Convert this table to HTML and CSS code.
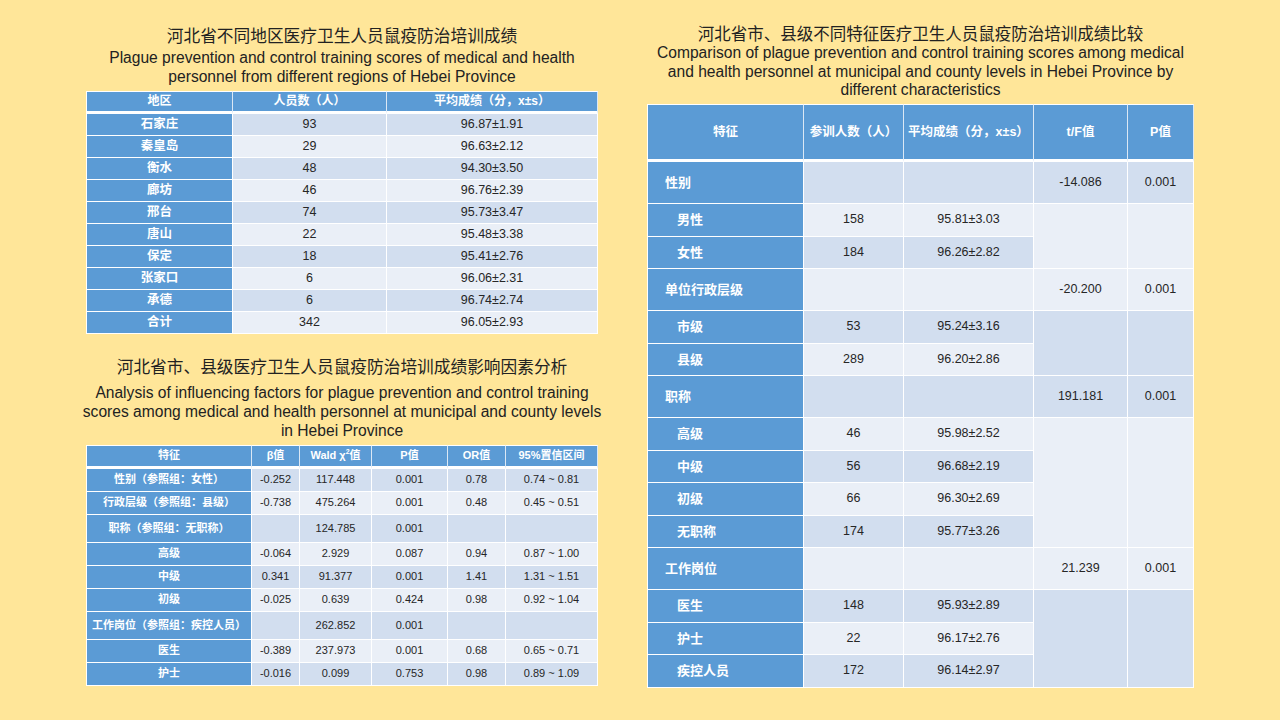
FILE: index.html
```html
<!DOCTYPE html>
<html lang="zh-CN">
<head>
<meta charset="utf-8">
<title>河北省鼠疫防治培训成绩</title>
<link rel="stylesheet" href="styles.css">
</head>
<body>
<main class="page">
  <section class="col col-left">
    <div class="block">
      <h2 class="title-zh">河北省不同地区医疗卫生人员鼠疫防治培训成绩</h2>
      <p class="title-en">Plague prevention and control training scores of medical and health<br>personnel from different regions of Hebei Province</p>
      <table class="tbl tbl-regions">
        <colgroup><col class="r1"><col class="r2"><col class="r3"></colgroup>
        <thead>
          <tr><th>地区</th><th>人员数（人）</th><th>平均成绩（分，x±s）</th></tr>
        </thead>
        <tbody>
          <tr><th>石家庄</th><td>93</td><td>96.87±1.91</td></tr>
          <tr><th>秦皇岛</th><td>29</td><td>96.63±2.12</td></tr>
          <tr><th>衡水</th><td>48</td><td>94.30±3.50</td></tr>
          <tr><th>廊坊</th><td>46</td><td>96.76±2.39</td></tr>
          <tr><th>邢台</th><td>74</td><td>95.73±3.47</td></tr>
          <tr><th>唐山</th><td>22</td><td>95.48±3.38</td></tr>
          <tr><th>保定</th><td>18</td><td>95.41±2.76</td></tr>
          <tr><th>张家口</th><td>6</td><td>96.06±2.31</td></tr>
          <tr><th>承德</th><td>6</td><td>96.74±2.74</td></tr>
          <tr><th>合计</th><td>342</td><td>96.05±2.93</td></tr>
        </tbody>
      </table>
    </div>

    <div class="block block-factors">
      <h2 class="title-zh">河北省市、县级医疗卫生人员鼠疫防治培训成绩影响因素分析</h2>
      <p class="title-en">Analysis of influencing factors for plague prevention and control training<br>scores among medical and health personnel at municipal and county levels<br>in Hebei Province</p>
      <table class="tbl tbl-factors">
        <colgroup><col class="f1"><col class="f2"><col class="f3"><col class="f4"><col class="f5"><col class="f6"></colgroup>
        <thead>
          <tr><th>特征</th><th>β值</th><th>Wald χ<sup>2</sup>值</th><th>P值</th><th>OR值</th><th>95%置信区间</th></tr>
        </thead>
        <tbody>
          <tr><th><span class="fit">性别（参照组：女性）</span></th><td>-0.252</td><td>117.448</td><td>0.001</td><td>0.78</td><td>0.74 ~ 0.81</td></tr>
          <tr><th><span class="fit">行政层级（参照组：县级）</span></th><td>-0.738</td><td>475.264</td><td>0.001</td><td>0.48</td><td>0.45 ~ 0.51</td></tr>
          <tr class="tall"><th><span class="fit">职称（参照组：无职称）</span></th><td></td><td>124.785</td><td>0.001</td><td></td><td></td></tr>
          <tr><th><span class="fit">高级</span></th><td>-0.064</td><td>2.929</td><td>0.087</td><td>0.94</td><td>0.87 ~ 1.00</td></tr>
          <tr><th><span class="fit">中级</span></th><td>0.341</td><td>91.377</td><td>0.001</td><td>1.41</td><td>1.31 ~ 1.51</td></tr>
          <tr><th><span class="fit">初级</span></th><td>-0.025</td><td>0.639</td><td>0.424</td><td>0.98</td><td>0.92 ~ 1.04</td></tr>
          <tr class="tall"><th><span class="fit">工作岗位（参照组：疾控人员）</span></th><td></td><td>262.852</td><td>0.001</td><td></td><td></td></tr>
          <tr><th><span class="fit">医生</span></th><td>-0.389</td><td>237.973</td><td>0.001</td><td>0.68</td><td>0.65 ~ 0.71</td></tr>
          <tr><th><span class="fit">护士</span></th><td>-0.016</td><td>0.099</td><td>0.753</td><td>0.98</td><td>0.89 ~ 1.09</td></tr>
        </tbody>
      </table>
    </div>
  </section>

  <section class="col col-right">
    <h2 class="title-zh title-zh-right">河北省市、县级不同特征医疗卫生人员鼠疫防治培训成绩比较</h2>
    <p class="title-en title-en-right">Comparison of plague prevention and control training scores among medical<br>and health personnel at municipal and county levels in Hebei Province by<br>different characteristics</p>
    <table class="tbl tbl-compare">
      <colgroup><col class="c1"><col class="c2"><col class="c3"><col class="c4"><col class="c5"></colgroup>
      <thead>
        <tr><th>特征</th><th>参训人数（人）</th><th><span class="fit">平均成绩（分，x±s）</span></th><th>t/F值</th><th>P值</th></tr>
      </thead>
      <tbody>
        <tr class="grp"><th>性别</th><td></td><td></td><td>-14.086</td><td>0.001</td></tr>
        <tr class="sub"><th>男性</th><td>158</td><td>95.81±3.03</td><td rowspan="2"></td><td rowspan="2"></td></tr>
        <tr class="sub"><th>女性</th><td>184</td><td>96.26±2.82</td></tr>
        <tr class="grp"><th>单位行政层级</th><td></td><td></td><td>-20.200</td><td>0.001</td></tr>
        <tr class="sub"><th>市级</th><td>53</td><td>95.24±3.16</td><td rowspan="2"></td><td rowspan="2"></td></tr>
        <tr class="sub"><th>县级</th><td>289</td><td>96.20±2.86</td></tr>
        <tr class="grp"><th>职称</th><td></td><td></td><td>191.181</td><td>0.001</td></tr>
        <tr class="sub"><th>高级</th><td>46</td><td>95.98±2.52</td><td rowspan="4"></td><td rowspan="4"></td></tr>
        <tr class="sub"><th>中级</th><td>56</td><td>96.68±2.19</td></tr>
        <tr class="sub"><th>初级</th><td>66</td><td>96.30±2.69</td></tr>
        <tr class="sub"><th>无职称</th><td>174</td><td>95.77±3.26</td></tr>
        <tr class="grp"><th>工作岗位</th><td></td><td></td><td>21.239</td><td>0.001</td></tr>
        <tr class="sub"><th>医生</th><td>148</td><td>95.93±2.89</td><td rowspan="3"></td><td rowspan="3"></td></tr>
        <tr class="sub"><th>护士</th><td>22</td><td>96.17±2.76</td></tr>
        <tr class="sub"><th>疾控人员</th><td>172</td><td>96.14±2.97</td></tr>
      </tbody>
    </table>
  </section>
</main>
</body>
</html>
```

FILE: styles.css
```css
html, body {
  margin: 0;
  padding: 0;
}

body {
  width: 1280px;
  height: 720px;
  overflow: hidden;
  background: #ffe699;
  color: #222;
  font-family: "Liberation Sans", "Noto Sans CJK SC", sans-serif;
}

.page {
  display: flex;
  gap: 49px;
  padding: 24px 0 0 86px;
}

.col-left {
  width: 512px;
  display: flex;
  flex-direction: column;
}

.col-right {
  width: 547px;
}

.title-zh {
  margin: 0;
  font-family: "Noto Sans CJK SC", sans-serif;
  font-weight: 400;
  font-size: 16.7px;
  line-height: 22px;
  text-align: center;
  color: #222;
  white-space: nowrap;
}

.title-en {
  margin: 2px -20px 5px;
  font-family: "Liberation Sans", sans-serif;
  font-size: 15.6px;
  line-height: 19px;
  text-align: center;
  color: #222;
  white-space: nowrap;
}

.block-factors {
  margin-top: 21px;
}

.block-factors .title-en {
  margin-top: 5.5px;
  margin-bottom: 5.5px;
}

.title-zh-right {
  font-size: 16.5px;
  line-height: 18px;
  margin-top: 0;
}

.title-en-right {
  margin-top: 2px;
  margin-bottom: 4px;
  line-height: 18.7px;
}

/* ---------- tables ---------- */
.tbl {
  border-collapse: separate;
  border-spacing: 0;
  table-layout: fixed;
}

.tbl th,
.tbl td {
  padding: 0;
  border-right: 1px solid #fff;
  border-bottom: 1px solid #fff;
  text-align: center;
  vertical-align: middle;
  white-space: nowrap;
  line-height: 1.2;
}

.tbl tr > :first-child {
  border-left: 1px solid #fff;
}

.tbl thead th {
  background: #5b9bd5;
  color: #fff;
  font-weight: 700;
  border-top: 1px solid #fff;
  border-bottom: 3px solid #fff;
  border-right-color: #dbe8f5;
}

.tbl tbody th {
  background: #5b9bd5;
  color: #fff;
  font-weight: 700;
}

.tbl tbody td {
  color: #262626;
}

.tbl tbody tr:nth-child(odd) td {
  background: #d2deef;
}

.tbl tbody tr:nth-child(even) td {
  background: #eaeff7;
}

.fit {
  display: flex;
  justify-content: center;
  white-space: nowrap;
}

/* regions table */
.tbl-regions {
  width: 512px;
}
.tbl-regions .r1 { width: 147px; }
.tbl-regions .r2 { width: 154px; }
.tbl-regions .r3 { width: 211px; }

.tbl-regions thead tr { height: 23px; }
.tbl-regions tbody tr { height: 22px; }
.tbl-regions thead th { font-size: 12px; }
.tbl-regions tbody th { font-size: 12.5px; }
.tbl-regions tbody td { font-size: 12.5px; }

/* factors table */
.tbl-factors {
  width: 512px;
}
.tbl-factors .f1 { width: 166px; }
.tbl-factors .f2 { width: 48px; }
.tbl-factors .f3 { width: 72px; }
.tbl-factors .f4 { width: 76px; }
.tbl-factors .f5 { width: 58px; }
.tbl-factors .f6 { width: 92px; }

.tbl-factors thead tr { height: 24px; }
.tbl-factors tbody tr { height: 23px; }
.tbl-factors tbody tr.tall { height: 28px; }
.tbl-factors thead th { font-size: 11px; }
.tbl-factors thead sup { font-size: 7px; line-height: 0; }
.tbl-factors tbody th { font-size: 11px; overflow: visible; }
.tbl-factors tbody td { font-size: 11px; }

/* compare table */
.tbl-compare {
  width: 547px;
}
.tbl-compare .c1 { width: 157px; }
.tbl-compare .c2 { width: 100px; }
.tbl-compare .c3 { width: 130px; }
.tbl-compare .c4 { width: 94px; }
.tbl-compare .c5 { width: 66px; }

.tbl-compare thead tr { height: 58px; }
.tbl-compare thead th { font-size: 12.5px; }
.tbl-compare tbody tr.grp { height: 42px; }
.tbl-compare tbody tr.sub { height: 32.5px; }
.tbl-compare tbody th {
  text-align: left;
  font-size: 13px;
}
.tbl-compare tbody tr.grp th { padding-left: 17px; }
.tbl-compare tbody tr.sub th { padding-left: 29px; }
.tbl-compare tbody td { font-size: 12.5px; }
```
